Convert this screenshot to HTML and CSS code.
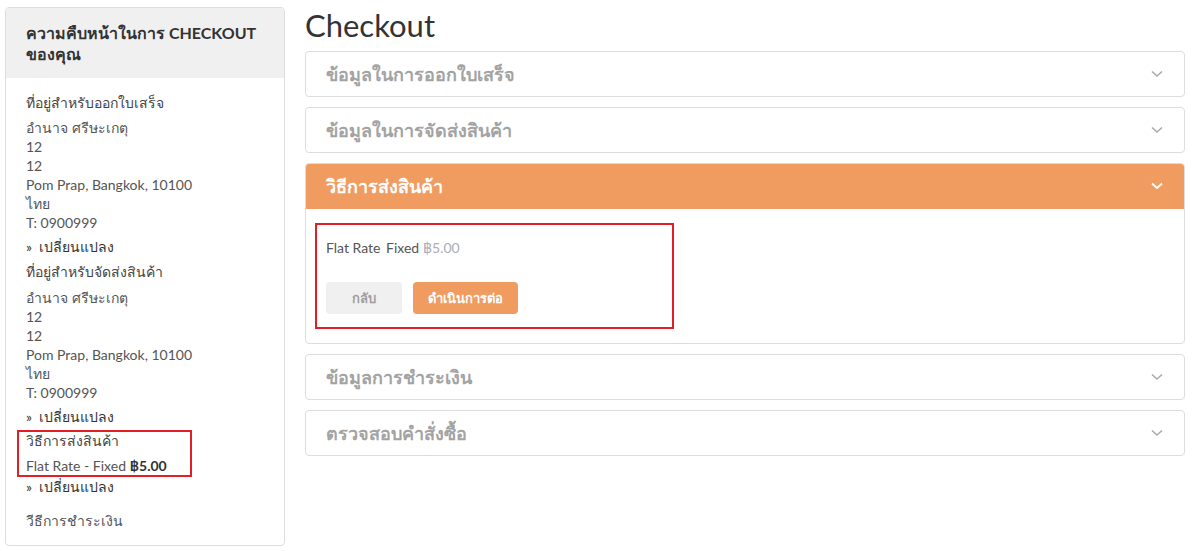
FILE: index.html
```html
<!DOCTYPE html>
<html lang="th">
<head>
<meta charset="utf-8">
<title>Checkout</title>
<link rel="stylesheet" href="styles.css">
</head>
<body>
<div class="page">
  <aside class="progress">
    <div class="progress-head">ความคืบหน้าในการ CHECKOUT ของคุณ</div>
    <div class="progress-body">
      <div class="step-title">ที่อยู่สำหรับออกใบเสร็จ</div>
      <div class="addr">
        <div>อำนาจ ศรีษะเกตุ</div>
        <div>12</div>
        <div>12</div>
        <div>Pom Prap, Bangkok, 10100</div>
        <div>ไทย</div>
        <div>T: 0900999</div>
      </div>
      <div class="change">» &nbsp;เปลี่ยนแปลง</div>
      <div class="step-title second">ที่อยู่สำหรับจัดส่งสินค้า</div>
      <div class="addr">
        <div>อำนาจ ศรีษะเกตุ</div>
        <div>12</div>
        <div>12</div>
        <div>Pom Prap, Bangkok, 10100</div>
        <div>ไทย</div>
        <div>T: 0900999</div>
      </div>
      <div class="change">» &nbsp;เปลี่ยนแปลง</div>
      <div class="mark-box">
        <div class="mark-title">วิธีการส่งสินค้า</div>
        <div class="mark-line">Flat Rate - Fixed <b>฿5.00</b></div>
      </div>
      <div class="change tight">» &nbsp;เปลี่ยนแปลง</div>
      <div class="step-title last">วีธีการชำระเงิน</div>
    </div>
  </aside>
  <main class="main">
    <h1 class="page-title">Checkout</h1>
    <section class="panel">
      <div class="panel-head"><span>ข้อมูลในการออกใบเสร็จ</span><svg class="chev" width="12" height="8" viewBox="0 0 12 8"><path d="M1 1.5 L6 6 L11 1.5" fill="none" stroke="currentColor" stroke-width="1.6"/></svg></div>
    </section>
    <section class="panel">
      <div class="panel-head"><span>ข้อมูลในการจัดส่งสินค้า</span><svg class="chev" width="12" height="8" viewBox="0 0 12 8"><path d="M1 1.5 L6 6 L11 1.5" fill="none" stroke="currentColor" stroke-width="1.6"/></svg></div>
    </section>
    <section class="panel open">
      <div class="panel-head"><span>วิธีการส่งสินค้า</span><svg class="chev" width="12" height="8" viewBox="0 0 12 8"><path d="M1 1.5 L6 6 L11 1.5" fill="none" stroke="currentColor" stroke-width="1.8"/></svg></div>
      <div class="panel-body">
        <div class="ship-box">
          <div class="ship-line"><span class="method">Flat Rate</span> Fixed <span class="price">฿5.00</span></div>
          <div class="actions">
            <button class="btn btn-back">กลับ</button>
            <button class="btn btn-next">ดำเนินการต่อ</button>
          </div>
        </div>
      </div>
    </section>
    <section class="panel">
      <div class="panel-head"><span>ข้อมูลการชำระเงิน</span><svg class="chev" width="12" height="8" viewBox="0 0 12 8"><path d="M1 1.5 L6 6 L11 1.5" fill="none" stroke="currentColor" stroke-width="1.6"/></svg></div>
    </section>
    <section class="panel">
      <div class="panel-head"><span>ตรวจสอบคำสั่งซื้อ</span><svg class="chev" width="12" height="8" viewBox="0 0 12 8"><path d="M1 1.5 L6 6 L11 1.5" fill="none" stroke="currentColor" stroke-width="1.6"/></svg></div>
    </section>
  </main>
</div>
</body>
</html>
```
FILE: styles.css
```css
* { box-sizing: border-box; }
body {
  margin: 0;
  background: #fff;
  font-family: Lato, "Noto Sans", sans-serif;
  font-size: 14px;
  color: #555;
}
.page {
  display: flex;
  align-items: flex-start;
  gap: 20px;
  padding: 7px 0 0 5px;
}
.progress {
  width: 280px;
  flex: none;
  border: 1px solid #ddd;
  border-radius: 4px;
  overflow: hidden;
}
.progress-head {
  background: #f0f0f0;
  padding: 14px 20px 14px 20px;
  font-size: 16px;
  font-weight: bold;
  line-height: 21px;
  color: #333;
}
.progress-body {
  padding: 15px 20px 15px 20px;
  line-height: 19px;
}
.step-title { margin-bottom: 6px; color: #444; }
.step-title.second { margin-top: 6px; margin-bottom: 7px; }
.step-title.last { margin-top: 15px; margin-bottom: 0; color: #555; }
.change { margin-top: 5px; color: #333; }
.change.tight { margin-top: 0; }
.mark-box {
  margin: 4px 0 0 -9px;
  width: 175px;
  border: 2px solid #e31e24;
  padding: 0 7px;
  line-height: 18px;
}
.mark-title { margin-bottom: 7px; color: #444; }
.mark-line b { color: #333; }

.main {
  width: 880px;
  flex: none;
}
.page-title {
  margin: 0 0 8px 0;
  font-size: 31px;
  line-height: 36px;
  font-weight: normal;
  color: #333;
}
.panel {
  border: 1px solid #ddd;
  border-radius: 4px;
  margin-bottom: 10px;
  overflow: hidden;
}
.panel-head {
  height: 44px;
  display: flex;
  align-items: center;
  justify-content: space-between;
  padding: 0 21px 0 20px;
  font-size: 18px;
  font-weight: bold;
  color: #a3a3a3;
}
.chev { color: #aaa; }
.panel.open .panel-head {
  background: #f09c60;
  color: #fff;
  margin: -1px -1px 0 -1px;
  height: 46px;
  padding: 0 22px 0 21px;
}
.panel.open .chev { color: #fff; }
.panel-body {
  padding: 14px 9px 14px 9px;
}
.ship-box {
  width: 359px;
  border: 2px solid #e31e24;
  padding: 13px 9px 13px 9px;
  line-height: 19px;
}
.ship-line { color: #555; }
.method { margin-right: 2px; }
.price { color: #a9adb8; }
.actions {
  margin-top: 25px;
  display: flex;
  gap: 11px;
}
.btn {
  border: none;
  height: 32px;
  border-radius: 4px;
  font-family: Lato, "Noto Sans", sans-serif;
  font-size: 13px;
  font-weight: bold;
  padding: 0;
}
.btn-back { width: 76px; background: #f0f0f0; color: #a0a0a0; }
.btn-next { width: 105px; background: #f09c60; color: #fff; }
```
